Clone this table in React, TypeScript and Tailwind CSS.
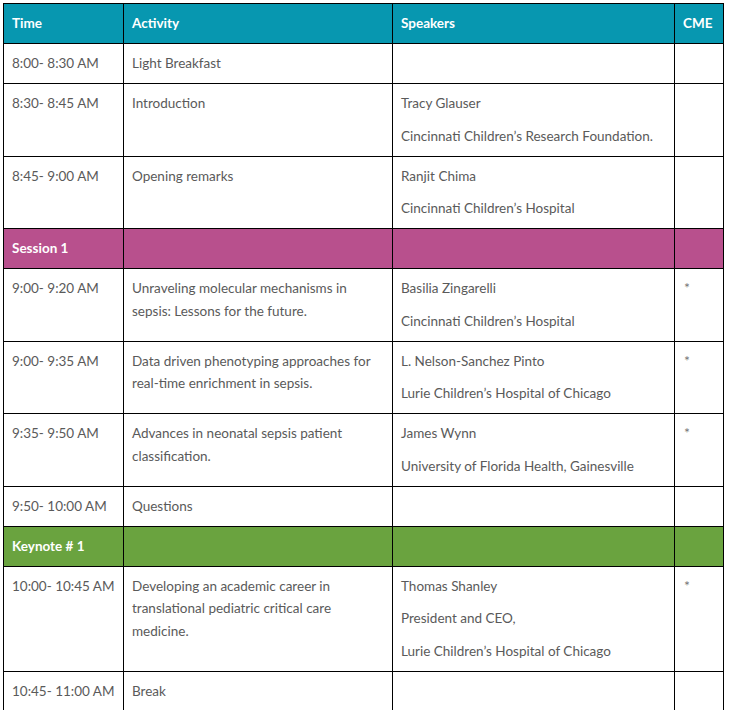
import React from "react";

type Row =
  | {kind: "item"; time: string; activity: string; speakers: string[]; cme?: boolean}
  | {kind: "section"; label: string; color: string};

const rows: Row[] = [
  {kind: "item", time: "8:00- 8:30 AM", activity: "Light Breakfast", speakers: []},
  {
    kind: "item",
    time: "8:30- 8:45 AM",
    activity: "Introduction",
    speakers: ["Tracy Glauser", "Cincinnati Children’s Research Foundation."],
  },
  {
    kind: "item",
    time: "8:45- 9:00 AM",
    activity: "Opening remarks",
    speakers: ["Ranjit Chima", "Cincinnati Children’s Hospital"],
  },
  {kind: "section", label: "Session 1", color: "bg-[#b8508d]"},
  {
    kind: "item",
    time: "9:00- 9:20 AM",
    activity: "Unraveling molecular mechanisms in sepsis: Lessons for the future.",
    speakers: ["Basilia Zingarelli", "Cincinnati Children’s Hospital"],
    cme: true,
  },
  {
    kind: "item",
    time: "9:00- 9:35 AM",
    activity: "Data driven phenotyping approaches for real-time enrichment in sepsis.",
    speakers: ["L. Nelson-Sanchez Pinto", "Lurie Children’s Hospital of Chicago"],
    cme: true,
  },
  {
    kind: "item",
    time: "9:35- 9:50 AM",
    activity: "Advances in neonatal sepsis patient classification.",
    speakers: ["James Wynn", "University of Florida Health, Gainesville"],
    cme: true,
  },
  {kind: "item", time: "9:50- 10:00 AM", activity: "Questions", speakers: []},
  {kind: "section", label: "Keynote # 1", color: "bg-[#6aa33f]"},
  {
    kind: "item",
    time: "10:00- 10:45 AM",
    activity: "Developing an academic career in translational pediatric critical care medicine.",
    speakers: ["Thomas Shanley", "President and CEO,", "Lurie Children’s Hospital of Chicago"],
    cme: true,
  },
  {kind: "item", time: "10:45- 11:00 AM", activity: "Break", speakers: []},
];

const cell = "border border-black align-top px-2 py-2";

export default function App() {
  return (
    <div
      className="min-h-[710px] bg-white pl-[3px] pt-[3px] text-[13.5px] leading-[22.75px] text-[#5a5a5a]"
      style={{fontFamily: "Lato, 'Open Sans', sans-serif"}}>
      <table className="border-collapse table-fixed w-[720px]">
        <colgroup>
          <col className="w-[120px]" />
          <col className="w-[269px]" />
          <col className="w-[282px]" />
          <col className="w-[49px]" />
        </colgroup>
        <thead>
          <tr className="bg-[#0797b0] text-white font-bold h-[40px]">
            <th className={`${cell} text-left align-middle`}>Time</th>
            <th className={`${cell} text-left align-middle`}>Activity</th>
            <th className={`${cell} text-left align-middle`}>Speakers</th>
            <th className={`${cell} text-left align-middle`}>CME</th>
          </tr>
        </thead>
        <tbody>
          {rows.map((r, i) =>
            r.kind === "section" ? (
              <tr key={i} className={`${r.color} text-white font-bold h-[40px]`}>
                <td className={`${cell} align-middle`}>{r.label}</td>
                <td className={cell}></td>
                <td className={cell}></td>
                <td className={cell}></td>
              </tr>
            ) : (
              <tr key={i} className="h-[40px]">
                <td className={cell}>{r.time}</td>
                <td className={`${cell} pr-4`}>{r.activity}</td>
                <td className={cell}>
                  <div className="flex flex-col gap-[10px]">
                    {r.speakers.map((s) => (
                      <p key={s}>{s}</p>
                    ))}
                  </div>
                </td>
                <td className={`${cell} text-[14px] pl-[9px] text-[#777]`}>{r.cme ? "*" : ""}</td>
              </tr>
            ),
          )}
        </tbody>
      </table>
    </div>
  );
}
